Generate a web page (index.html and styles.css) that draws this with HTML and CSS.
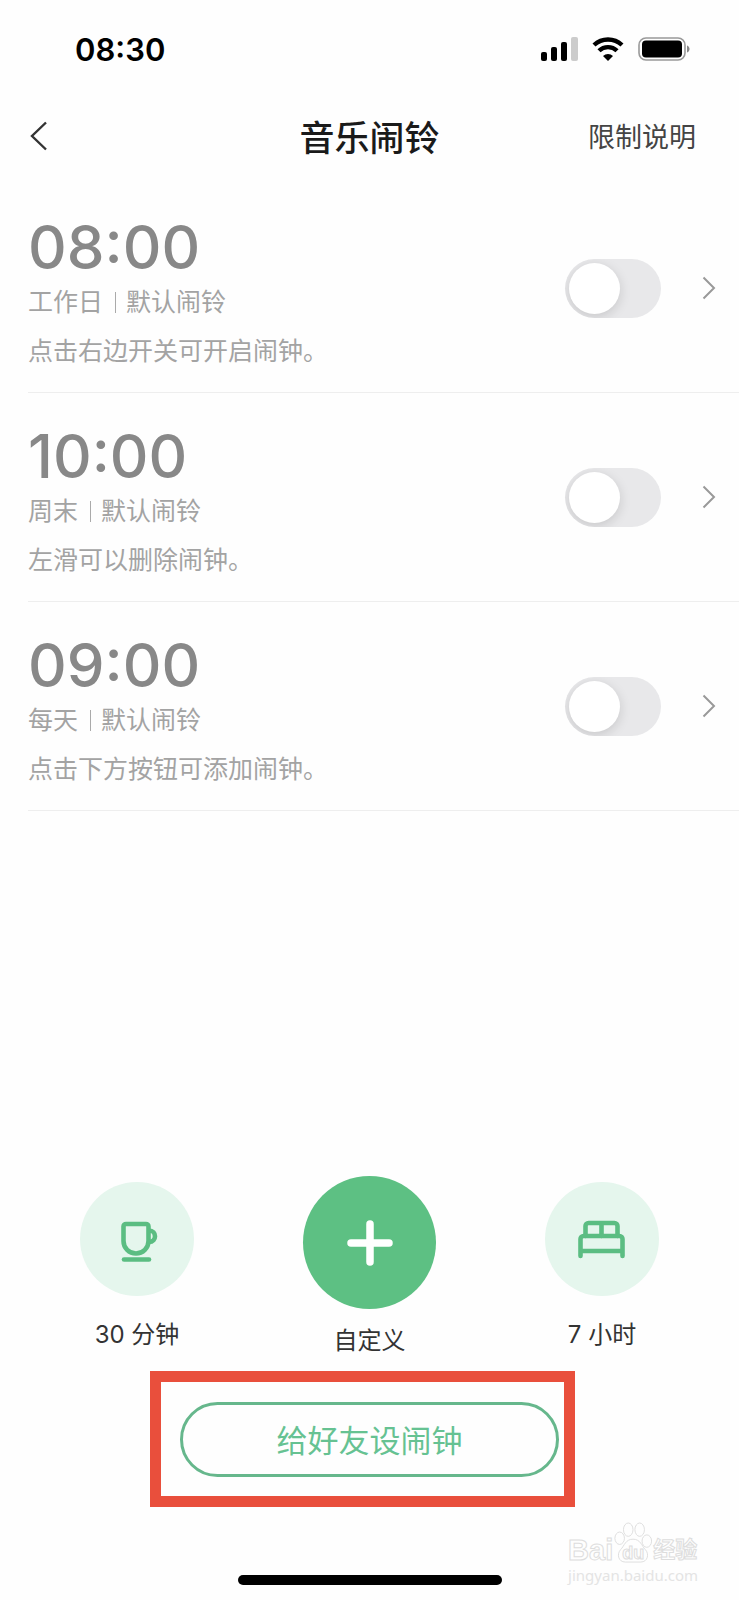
FILE: index.html
```html
<!DOCTYPE html>
<html lang="zh-CN">
<head>
    <meta charset="UTF-8">
    <meta name="viewport" content="width=device-width, initial-scale=1.0">
    <title>音乐闹铃</title>
    <link rel="stylesheet" href="styles.css">
</head>
<body>

<div class="status-bar">
    <span class="clock">08:30</span>
    <div class="status-icons">
        <svg width="37" height="24" viewBox="0 0 37 24">
            <rect x="0" y="15" width="6" height="9" rx="2"/>
            <rect x="10" y="10" width="6" height="14" rx="2"/>
            <rect x="20" y="5" width="6" height="19" rx="2"/>
            <rect x="30" y="0" width="7" height="24" rx="2" fill="#ccc"/>
        </svg>
        <svg width="32" height="24" viewBox="0 0 32 24">
            <path d="M2 8a20.500 20.500 0 0 1 28 0M7 13.800a12.800 12.800 0 0 1 18 0" fill="none" stroke="#000" stroke-width="4.400"/>
            <path d="M11 19a7.400 7.400 0 0 1 10 0l-5 5z"/>
        </svg>
        <svg width="52" height="24" viewBox="0 0 52 24">
            <rect x="1" y="1" width="46" height="22" rx="7" fill="none" stroke="#999" stroke-width="1.600"/>
            <rect x="4" y="3.500" width="40" height="17" rx="4"/>
            <path d="M49 8.500c3.400 1.200 3.400 5.800 0 7z" fill="#888"/>
        </svg>
    </div>
</div>

<header class="nav">
    <button class="back" aria-label="返回">
        <svg width="18" height="30" viewBox="0 0 18 30">
            <path d="M16 1.500L2 15l14 13.500" fill="none" stroke="#333" stroke-width="2.400"/>
        </svg>
    </button>
    <h1>音乐闹铃</h1>
    <a class="help" href="#">限制说明</a>
</header>

<main class="alarms">
    <div class="alarm">
        <div class="info">
            <div class="time">08:00</div>
            <div class="repeat"><span>工作日</span><span class="ring">默认闹铃</span></div>
            <div class="note">点击右边开关可开启闹钟。</div>
        </div>
        <input type="checkbox" class="switch" aria-label="开启08:00闹钟">
        <button class="more" aria-label="编辑08:00闹钟">
            <svg width="14" height="24" viewBox="0 0 14 24">
                <path d="M1.500 1.500L12 12L1.500 22.500" fill="none" stroke="#999" stroke-width="2"/>
            </svg>
        </button>
    </div>
    <div class="alarm">
        <div class="info">
            <div class="time">10:00</div>
            <div class="repeat"><span>周末</span><span class="ring">默认闹铃</span></div>
            <div class="note">左滑可以删除闹钟。</div>
        </div>
        <input type="checkbox" class="switch" aria-label="开启10:00闹钟">
        <button class="more" aria-label="编辑10:00闹钟">
            <svg width="14" height="24" viewBox="0 0 14 24">
                <path d="M1.500 1.500L12 12L1.500 22.500" fill="none" stroke="#999" stroke-width="2"/>
            </svg>
        </button>
    </div>
    <div class="alarm">
        <div class="info">
            <div class="time">09:00</div>
            <div class="repeat"><span>每天</span><span class="ring">默认闹铃</span></div>
            <div class="note">点击下方按钮可添加闹钟。</div>
        </div>
        <input type="checkbox" class="switch" aria-label="开启09:00闹钟">
        <button class="more" aria-label="编辑09:00闹钟">
            <svg width="14" height="24" viewBox="0 0 14 24">
                <path d="M1.500 1.500L12 12L1.500 22.500" fill="none" stroke="#999" stroke-width="2"/>
            </svg>
        </button>
    </div>
</main>

<footer class="bottom">
    <div class="quick">
        <button class="quick-item">
            <span class="circle">
                <svg width="42" height="46" viewBox="-5 -5 42 46">
                    <g fill="none" stroke="#5bbd82" stroke-width="4.600">
                        <path d="M5 3h20a2.500 2.500 0 0 1 2.500 2.500V20a12.500 12.500 0 0 1-25 0V5.500A2.500 2.500 0 0 1 5 3z"/>
                        <path d="M28 9.500c8 0 8 11.500 0 11.500"/>
                        <path d="M3 38.500h25" stroke-linecap="round"/>
                    </g>
                </svg>
            </span>
            <span>30 分钟</span>
        </button>
        <button class="quick-item">
            <span class="circle add">
                <svg width="46" height="46" viewBox="0 0 46 46">
                    <path d="M23 4v38M4 23h38" fill="none" stroke="#fff" stroke-width="7.500" stroke-linecap="round"/>
                </svg>
            </span>
            <span>自定义</span>
        </button>
        <button class="quick-item">
            <span class="circle">
                <svg width="48" height="40" viewBox="0 0 48 40">
                    <g fill="none" stroke="#5bbd82" stroke-width="4.600" stroke-linecap="round">
                        <path d="M7.500 17V7a3 3 0 0 1 3-3h26a3 3 0 0 1 3 3v10M23.500 4v13"/>
                        <path d="M2.500 37V20a3 3 0 0 1 3-3h36a3 3 0 0 1 3 3v17M2.500 32h42"/>
                    </g>
                </svg>
            </span>
            <span>7 小时</span>
        </button>
    </div>
    <div class="friend-wrap">
        <button class="friend">给好友设闹钟</button>
        <div class="highlight"></div>
    </div>
    <div class="home-bar"></div>
</footer>

<div class="watermark">
    <div class="wm-logo">
        <span>Bai</span>
        <span class="paw">
            <svg width="40" height="44" viewBox="0 0 42 44">
                <g fill="#fefefe" stroke="#ddd">
                    <ellipse cx="7" cy="17" rx="5" ry="6.500"/>
                    <ellipse cx="16" cy="8" rx="5" ry="7"/>
                    <ellipse cx="28" cy="8" rx="5" ry="7"/>
                    <ellipse cx="35.500" cy="20" rx="5" ry="6.500"/>
                    <path d="M21 18c8 0 9 7 13 11s3 13-5 13H13C5 42 4 33 8 29s5-11 13-11z"/>
                </g>
            </svg>
            <span class="du">du</span>
        </span>
        <span class="jy">经验</span>
    </div>
    <div class="wm-url">jingyan.baidu.com</div>
</div>

</body>
</html>
```

FILE: styles.css
```css
* {
    box-sizing: border-box;
}
body {
    margin: 0;
    min-height: 100vh;
    display: flex;
    flex-direction: column;
    position: relative;
    background: #fefefe;
    color: #333;
    font-family: Inter, "Noto Sans CJK SC", sans-serif;
}
button {
    padding: 0;
    border: 0;
    background: none;
    color: inherit;
    font-family: inherit;
    cursor: pointer;
}
svg {
    display: block;
}

/* 状态栏 */
.status-bar {
    height: 98px;
    padding: 0 49px 0 75px;
    display: flex;
    align-items: center;
    justify-content: space-between;
}
.clock {
    color: #000;
    font-size: 31px;
    font-weight: 600;
}
.status-icons {
    display: flex;
    gap: 14px;
}

/* 标题栏 */
.nav {
    height: 86px;
    padding: 0 43px 11px 30px;
    display: grid;
    grid-template-columns: 1fr auto 1fr;
    align-items: center;
}
.back {
    justify-self: start;
}
.nav h1 {
    margin: 0 0 0 13px;
    color: #1a1a1a;
    font-size: 35px;
    font-weight: 500;
}
.help {
    justify-self: end;
    color: #444;
    font-size: 27px;
    font-weight: 400;
    text-decoration: none;
}

/* 闹钟列表 */
.alarms {
    flex: 1;
    padding-left: 28px;
}
.alarm {
    height: 209px;
    padding-right: 23px;
    display: flex;
    align-items: center;
    border-bottom: 1px solid #eee;
}
.info {
    flex: 1;
    padding-top: 4px;
    color: #a3a3a3;
    font-size: 25px;
}
.time {
    color: #888;
    font-size: 60px;
    font-weight: 500;
    line-height: 74px;
}
.repeat {
    display: flex;
    align-items: center;
    line-height: 36px;
}
.ring {
    display: flex;
    align-items: center;
}
.ring::before {
    content: "";
    width: 1px;
    height: 21px;
    margin: 0 10px 0 12px;
    background: #aaa;
}
.note {
    margin-top: 12px;
    line-height: 38px;
}
.switch {
    appearance: none;
    width: 96px;
    height: 59px;
    margin: 0 41px 0 0;
    padding: 4px;
    border-radius: 30px;
    background: #e8e8ea;
    overflow: hidden;
    cursor: pointer;
}
.switch::before {
    content: "";
    display: block;
    width: 51px;
    height: 51px;
    border-radius: 50%;
    background: #fff;
    box-shadow: 0 3px 12px rgba(0, 0, 0, 0.14);
}
.switch:checked {
    background: #5bbd82;
}
.switch:checked::before {
    margin-left: 37px;
}

/* 底部操作 */
.bottom {
    padding-bottom: 15px;
    display: flex;
    flex-direction: column;
    align-items: center;
}
.quick {
    width: 100%;
    padding: 0 80px;
    display: flex;
    align-items: center;
    justify-content: space-between;
}
.quick-item {
    display: flex;
    flex-direction: column;
    align-items: center;
    gap: 20px;
    font-size: 24px;
    line-height: 38px;
}
.circle {
    width: 114px;
    height: 114px;
    display: flex;
    align-items: center;
    justify-content: center;
    border-radius: 50%;
    background: #e5f6ed;
}
.circle.add {
    width: 133px;
    height: 133px;
    background: #5dc083;
}
.quick-item:nth-child(2) {
    gap: 13px;
}
.friend-wrap {
    position: relative;
    margin-top: 42px;
}
.friend {
    width: 379px;
    height: 75px;
    padding-bottom: 3px;
    display: block;
    border: 3px solid #66b78c;
    border-radius: 38px;
    color: #66c292;
    font-size: 31px;
    font-weight: 400;
}
.highlight {
    position: absolute;
    top: -31px;
    right: -16px;
    bottom: -30px;
    left: -30px;
    border: 11px solid #e94f3c;
    pointer-events: none;
}
.home-bar {
    width: 264px;
    height: 10px;
    margin-top: 98px;
    border-radius: 5px;
    background: #000;
}

/* 水印 */
.watermark {
    position: absolute;
    right: 41px;
    bottom: 15px;
    color: #fefefe;
    font-family: "Liberation Sans", "Noto Sans CJK SC", sans-serif;
    font-weight: bold;
    -webkit-text-stroke: 1px #ddd;
}
.wm-logo {
    display: flex;
    align-items: flex-end;
    font-size: 29px;
    line-height: 30px;
}
.paw {
    position: relative;
}
.du {
    position: absolute;
    inset: 17px 0 0;
    font-size: 18px;
    text-align: center;
}
.jy {
    font-size: 22px;
}
.wm-url {
    color: #e4e4e4;
    font-family: "Noto Sans", sans-serif;
    font-size: 15px;
    font-weight: 400;
    line-height: 20px;
    -webkit-text-stroke: 0;
}
```
